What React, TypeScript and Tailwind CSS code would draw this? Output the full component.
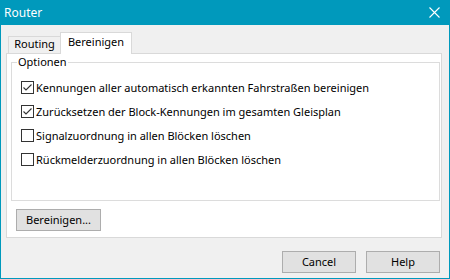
import React from "react";

const options = [
  { label: "Kennungen aller automatisch erkannten Fahrstraßen bereinigen", checked: true },
  { label: "Zurücksetzen der Block-Kennungen im gesamten Gleisplan", checked: true },
  { label: "Signalzuordnung in allen Blöcken löschen", checked: false },
  { label: "Rückmelderzuordnung in allen Blöcken löschen", checked: false },
];

function CheckBox({ checked }: { checked: boolean }) {
  return (
    <span className="flex h-[13px] w-[13px] shrink-0 items-center justify-center border border-[#333333] bg-white">
      {checked && (
        <svg width="11" height="11" viewBox="0 0 11 11">
          <path d="M1.5 5.5 L4 8 L9.5 2.5" fill="none" stroke="#333333" strokeWidth="1.1" />
        </svg>
      )}
    </span>
  );
}

function WinButton({ children, className }: { children: React.ReactNode; className: string }) {
  return (
    <button className={`flex items-center justify-center border border-[#adadad] bg-[#e1e1e1] text-[11px] text-black ${className}`}>
      {children}
    </button>
  );
}

export default function App() {
  return (
    <div
      className="flex h-[279px] w-[450px] flex-col border border-[#0099bc] bg-[#f0f0f0] text-[11px] text-black"
      style={{ fontFamily: '"Segoe UI", "Noto Sans", sans-serif' }}
    >
      <div className="-mx-px -mt-px flex h-[25px] shrink-0 items-center justify-between bg-[#0099bc] pl-[4px] pr-[10px] text-white">
        <span className="text-[12px]">Router</span>
        <svg width="11" height="11" viewBox="0 0 11 11">
          <path d="M0.5 0.5 L10.5 10.5 M10.5 0.5 L0.5 10.5" stroke="white" strokeWidth="1.1" />
        </svg>
      </div>

      <div className="flex flex-1 flex-col pl-[5px] pr-[7px] pt-[7px]">
        <div className="flex h-[21px] items-end">
          <div className="ml-[2px] flex h-[17px] w-[53px] items-center justify-center border border-b-0 border-[#d9d9d9] bg-[#f0f0f0] pb-px">
            Routing
          </div>
          <div className="relative z-10 -mb-px -ml-px flex h-[22px] w-[72px] items-center justify-center border border-b-0 border-[#d9d9d9] bg-white pb-[2px]">
            Bereinigen
          </div>
        </div>

        <div className="flex h-[185px] flex-col border border-[#d9d9d9] bg-white">
          <div className="relative ml-[4px] mr-px mt-[8px] flex h-[139px] flex-col gap-[11px] border border-[#dcdcdc] pl-[9px] pt-[18px]">
            <span className="absolute -top-[9px] left-[5px] bg-white px-[1px] leading-[16px]">Optionen</span>
            {options.map((o) => (
              <label key={o.label} className="flex h-[13px] items-center gap-[2px]">
                <CheckBox checked={o.checked} />
                <span className="leading-[16px]">{o.label}</span>
              </label>
            ))}
          </div>
          <WinButton className="ml-[9px] mt-[8px] h-[22px] w-[85px]">Bereinigen...</WinButton>
        </div>

        <div className="mt-[13px] flex justify-end gap-[10px] pr-[2px]">
          <WinButton className="h-[22px] w-[74px]">Cancel</WinButton>
          <WinButton className="h-[22px] w-[74px]">Help</WinButton>
        </div>
      </div>
    </div>
  );
}
